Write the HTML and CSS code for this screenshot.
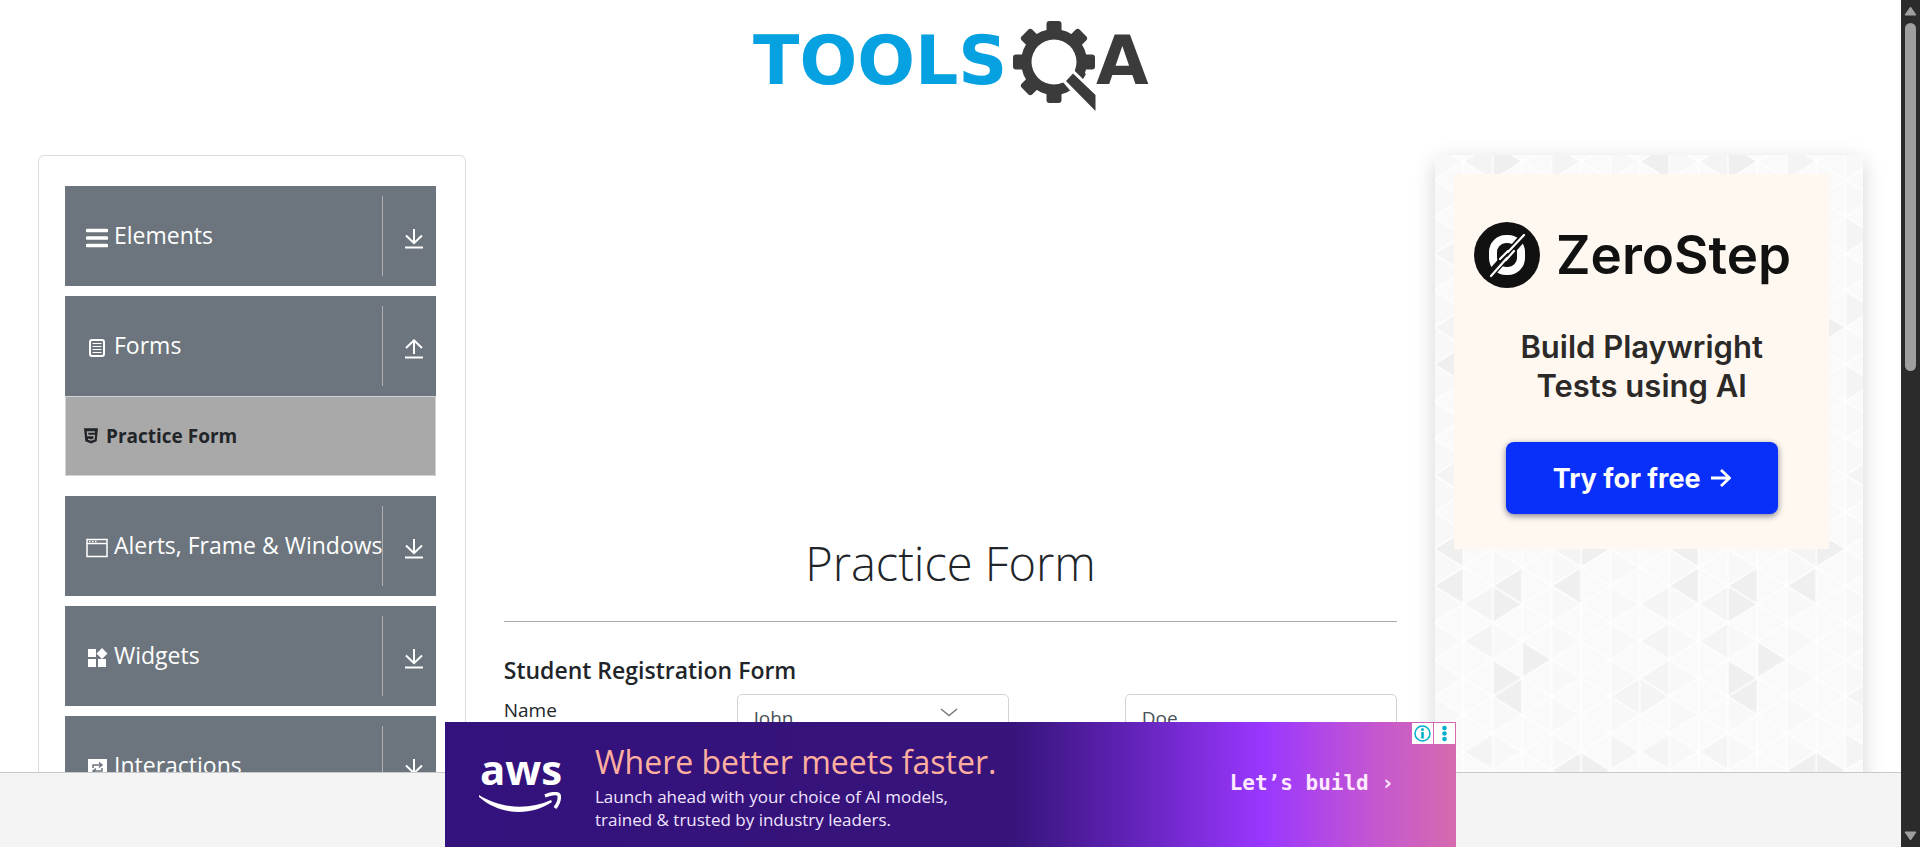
FILE: index.html
```html
<!DOCTYPE html>
<html lang="en">
<head>
<meta charset="utf-8">
<title>Practice Form</title>
<link rel="stylesheet" href="styles.css">
</head>
<body>
<svg class="sprite" aria-hidden="true">
  <symbol id="arrow-down" viewBox="0 0 20 20"><path d="M10 0V14M2 6.500L10 14.200L18 6.500M1 18.500H19" fill="none" stroke="currentColor" stroke-width="2"/></symbol>
  <symbol id="arrow-up" viewBox="0 0 20 20"><path d="M10 15V1M2 9L10 1.300L18 9M1 18.500H19" fill="none" stroke="currentColor" stroke-width="2"/></symbol>
</svg>
<div class="window">
  <div class="page">
    <header class="header">
      <a href="#" aria-label="ToolsQA home">
        <svg class="brand" viewBox="10 0 400 110">
          <text class="brand-text brand-blue" x="12" y="74">TOOLS</text>
          <g fill="#3b3b3b">
            <circle cx="313" cy="52" r="33"/>
            <g id="teeth">
              <rect x="305.500" y="11" width="15" height="82" rx="3"/>
              <rect x="305.500" y="11" width="15" height="82" rx="3" transform="rotate(45 313 52)"/>
              <rect x="305.500" y="11" width="15" height="82" rx="3" transform="rotate(90 313 52)"/>
              <rect x="305.500" y="11" width="15" height="82" rx="3" transform="rotate(135 313 52)"/>
            </g>
            <circle cx="313" cy="52" r="22.500" fill="#fff"/>
            <path d="M321 71L332 59L356 82V112Z" fill="#fff"/>
            <path d="M325 71L332 63.500L354.500 85V101Z"/>
            <path d="M334 61L336 58L345 64L342 69Z"/>
          </g>
          <text class="brand-text brand-dark" x="355" y="74">A</text>
        </svg>
      </a>
    </header>
    <div class="columns">
      <nav class="sidebar">
        <div class="group">
          <button class="group-head" type="button">
            <svg class="icon" viewBox="0 0 22 22"><path d="M1.500 4.500H20.500M1.500 12H20.500M1.500 19.500H20.500" stroke="currentColor" stroke-width="3.600" stroke-linecap="round"/></svg>
            <span class="group-name">Elements</span>
            <span class="toggle"><svg class="arrow"><use href="#arrow-down"/></svg></span>
          </button>
        </div>
        <div class="group group-open">
          <button class="group-head" type="button">
            <svg class="icon" viewBox="0 0 22 22"><rect x="4" y="4" width="14" height="16" rx="2" fill="none" stroke="currentColor" stroke-width="2"/><path d="M6.500 7.500H15.500M6.500 10.500H15.500M6.500 13.500H15.500M6.500 16.500H15.500" stroke="currentColor"/></svg>
            <span class="group-name">Forms</span>
            <span class="toggle"><svg class="arrow"><use href="#arrow-up"/></svg></span>
          </button>
          <a class="entry" href="#">
            <svg class="entry-icon" viewBox="0 0 16 18"><path d="M0 0H16L14.500 15L8 17.500L1.500 15Z" fill="currentColor"/><path d="M12.500 4.500H4L4.300 8.500H11.800L11.400 12.500L8 13.700L4.600 12.500" fill="none" stroke="#a9a9a9" stroke-width="1.600"/></svg>
            Practice Form
          </a>
        </div>
        <div class="group">
          <button class="group-head" type="button">
            <svg class="icon" viewBox="0 0 22 22"><path d="M1 3.500H21V20.500H1ZM1 7.500H21" fill="none" stroke="currentColor" stroke-width="1.500"/><path d="M3 5.500H11" stroke="currentColor" stroke-width="1.500" stroke-dasharray="1.500 1.500"/></svg>
            <span class="group-name">Alerts, Frame &amp; Windows</span>
            <span class="toggle"><svg class="arrow"><use href="#arrow-down"/></svg></span>
          </button>
        </div>
        <div class="group">
          <button class="group-head" type="button">
            <svg class="icon" viewBox="0 0 22 22" fill="currentColor"><path d="M2 3H10V11H2ZM2 13H10V21H2ZM12 13H20V21H12ZM16 2L21.500 7.500L16 13L10.500 7.500Z"/></svg>
            <span class="group-name">Widgets</span>
            <span class="toggle"><svg class="arrow"><use href="#arrow-down"/></svg></span>
          </button>
        </div>
        <div class="group">
          <button class="group-head" type="button">
            <svg class="icon" viewBox="0 0 22 22"><path d="M2 3H21V21H2Z" fill="currentColor"/><path d="M7 12V9H15M13 6.500L16 9L13 11.500M16 12V15H8M10 12.500L7 15L10 17.500" fill="none" stroke="#6c757d" stroke-width="1.500"/></svg>
            <span class="group-name">Interactions</span>
            <span class="toggle"><svg class="arrow"><use href="#arrow-down"/></svg></span>
          </button>
        </div>
      </nav>

      <main class="content">
        <h1 class="title">Practice Form</h1>
        <form class="form">
          <h2 class="form-title">Student Registration Form</h2>
          <div class="form-row">
            <label class="form-label" for="first">Name</label>
            <div class="field first">
              <input class="text-input" id="first" type="text" value="John">
              <svg class="field-icon" viewBox="0 0 18 9"><path d="M1 1L9 7.500L17 1" fill="none" stroke="#777" stroke-width="1.400"/></svg>
            </div>
            <div class="field last"><input class="text-input" type="text" value="Doe" aria-label="Last name"></div>
          </div>
        </form>
      </main>

      <aside class="promo">
        <svg class="promo-pattern" aria-hidden="true">
          <defs>
            <pattern id="mesh" width="2" height="2" patternUnits="userSpaceOnUse" patternTransform="translate(-1 -12) scale(29.4 18.45)">
              <path d="M0 0H2V2H0Z" fill="#fafafa"/>
              <path d="M0 0L1 1L0 2Z" fill="#f8f8f8"/>
            </pattern>
            <pattern id="shades" width="8" height="36" patternUnits="userSpaceOnUse" patternTransform="translate(-1 -12) scale(29.4 18.45)">
              <path fill="#efefef" d="M0 24L1 23V25ZM2 24L3 23V25ZM3 25L2 24V26ZM4 24L5 23V25ZM4 28L3 27V29ZM3 29L2 28V30ZM2 30L3 29V31ZM4 34L5 33V35ZM6 34L5 33V35ZM6 22L5 21V23ZM0 22L1 21V23ZM3 1L2 0V2ZM7 1L8 0V2ZM0 12L1 11V13ZM6 10L5 9V11Z"/>
              <path fill="#f4f4f4" d="M7 25L8 24V26ZM1 25L2 24V26ZM4 22L5 21V23ZM7 29L8 28V30ZM8 30L7 29V31ZM6 30L7 29V31ZM7 33L6 32V34ZM7 33L8 32V34ZM1 33L2 32V34ZM1 27L2 26V28ZM7 27L8 26V28ZM5 1L4 0V2ZM1 1L2 0V2ZM0 10L1 9V11ZM7 9L6 8V10ZM6 18L7 17V19ZM0 6L1 5V7ZM0 18L1 17V19ZM7 5L6 4V6ZM7 13L6 12V14Z"/>
            </pattern>
            <pattern id="lines" width="58.800" height="36.900" patternUnits="userSpaceOnUse" patternTransform="translate(-1 -12)">
              <path d="M0 0V36.900M58.800 0V36.900M29.400 0V36.900M0 0L58.800 36.900M58.800 0L0 36.900" fill="none" stroke="#fefefe" stroke-width="1.500"/>
            </pattern>
          </defs>
          <rect width="100%" height="100%" fill="url(#mesh)"/>
          <rect width="100%" height="100%" fill="url(#shades)"/>
          <rect width="100%" height="100%" fill="url(#lines)"/>
        </svg>
        <div class="zero">
          <div class="zero-brand">
            <svg class="zero-logo" viewBox="0 0 66 66"><circle cx="33" cy="33" r="33" fill="#111"/><rect x="19" y="17" width="28" height="32" rx="13" fill="none" stroke="#fff" stroke-width="8"/><path d="M14 55L52 12" stroke="#111" stroke-width="8"/><path d="M17 54L33 36M34 30L50 13M26 37L34 29M32 38L40 29" stroke="#fff" stroke-width="2.200" stroke-linecap="round"/></svg>
            ZeroStep
          </div>
          <p class="zero-text">Build Playwright<br>Tests using AI</p>
          <button class="zero-button" type="button">Try for free
            <svg class="zero-arrow" viewBox="0 0 20 18"><path d="M0 9H18M10 1L18.500 9L10 17" fill="none" stroke="#fff" stroke-width="2.800"/></svg>
          </button>
        </div>
      </aside>
    </div>

    <div class="dock">
      <div class="banner">
        <div class="aws">
          <span class="aws-name">aws</span>
          <svg class="aws-smile" viewBox="0 0 84 22"><path d="M0 3C22 17 50 18 72 8L73 10C52 24 22 24 0 5Z" fill="#fff"/><path d="M66 4C73 1 79 1 80 3C81 7 79 12 76 16" fill="none" stroke="#fff" stroke-width="3.500"/></svg>
        </div>
        <div class="banner-copy">
          <p class="banner-head">Where better meets faster.</p>
          <p class="banner-text">Launch ahead with your choice of AI models,<br>trained &amp; trusted by industry leaders.</p>
        </div>
        <a class="banner-link" href="#">Let’s build ›</a>
        <div class="ad-controls">
          <button class="ad-control" type="button" aria-label="Ad information"><svg viewBox="0 0 21 21"><circle cx="10.500" cy="10.500" r="7.500" fill="none" stroke="#00aecd" stroke-width="1.500"/><path d="M10.500 9V15.500" stroke="#00aecd" stroke-width="2.600"/><circle cx="10.500" cy="6.500" r="1.500" fill="#00aecd"/></svg></button>
          <button class="ad-control" type="button" aria-label="Ad options"><svg viewBox="0 0 21 21" fill="#00aecd"><circle cx="10.500" cy="5" r="2.300"/><circle cx="10.500" cy="10.500" r="2.300"/><circle cx="10.500" cy="16" r="2.300"/></svg></button>
        </div>
      </div>
    </div>
  </div>
  <div class="scrollbar" aria-hidden="true">
    <svg class="scroll-arrow" viewBox="0 0 13 10"><path d="M6.500 1L12 9H1Z" fill="#9f9f9f" stroke="#9f9f9f" stroke-linejoin="round"/></svg>
    <div class="scroll-track"><div class="scroll-thumb"></div></div>
    <svg class="scroll-arrow" viewBox="0 0 13 10"><path d="M6.500 9L12 1H1Z" fill="#9f9f9f" stroke="#9f9f9f" stroke-linejoin="round"/></svg>
  </div>
</div>
</body>
</html>
```

FILE: styles.css
```css
* { box-sizing: border-box; }

body {
  margin: 0;
  background: #fff;
  color: #212529;
  font-family: "Open Sans", "Noto Sans", sans-serif;
  font-size: 19px;
}

button, input { font: inherit; }
button { border: 0; cursor: pointer; }
p, h1, h2 { margin: 0; }

.sprite { position: absolute; width: 0; height: 0; }

.window { display: flex; height: 100vh; }

.page {
  position: relative;
  flex: 1;
  min-width: 0;
  overflow: hidden;
}

.header { padding: 10px 0 35px; text-align: center; }
.brand { display: block; width: 400px; height: 110px; margin: 0 auto; }
.brand-text { font: bold 68px "DejaVu Sans", sans-serif; }
.brand-blue { fill: #05a1e0; }
.brand-dark { fill: #3b3b3b; }

.columns {
  display: grid;
  grid-template-columns: repeat(4, minmax(0, 1fr));
  gap: 38px;
  padding: 0 38px;
}

.sidebar {
  padding: 30px 29px 30px 26px;
  border: 1px solid #dcdddf;
  border-radius: 6px;
}

.group { margin-bottom: 10px; }
.group-open { margin-bottom: 20px; }

.group-head {
  display: flex;
  align-items: center;
  width: 100%;
  height: 100px;
  padding: 10px 0 10px 21px;
  background: #6c757d;
  color: #fff;
  font-size: 23px;
  text-align: left;
  white-space: nowrap;
}

.icon { flex: none; width: 22px; height: 22px; margin-top: 2px; }
.group-name { flex: 1; min-width: 0; padding: 0 0 2px 6px; }

.toggle {
  display: flex;
  flex: none;
  align-items: center;
  justify-content: center;
  width: 54px;
  height: 80px;
  padding: 6px 0 0 10px;
  border-left: 1px solid #b0b0b0;
}

.arrow { width: 20px; height: 20px; }

.entry {
  display: flex;
  align-items: center;
  gap: 8px;
  height: 80px;
  padding-left: 18px;
  border: 1px solid #d0d3da;
  background: #a9a9a9;
  color: #212529;
  font-weight: 700;
  text-decoration: none;
}

.entry-icon { width: 14px; height: 16px; }

.content { grid-column: span 2; padding-top: 372px; }

.title {
  padding-bottom: 22px;
  border-bottom: 1px solid #a7a8aa;
  font-size: 47px;
  font-weight: 300;
  line-height: 72px;
  text-align: center;
}

.form-title {
  padding: 31px 0 7px;
  font-size: 23px;
  font-weight: 600;
  line-height: 34px;
}

.form-row {
  display: grid;
  grid-template-columns: repeat(12, minmax(0, 1fr));
  column-gap: 38px;
}

.form-label { grid-column: span 3; line-height: 32px; }
.field { position: relative; grid-column: span 4; }
.last { grid-column: 9 / span 4; }

.text-input {
  display: block;
  width: 100%;
  height: 48px;
  padding: 0 16px;
  border: 1px solid #ced4da;
  border-radius: 5px;
  background: #fff;
  color: #495057;
}

.field-icon { position: absolute; top: 14px; right: 51px; width: 18px; height: 9px; }

.promo {
  position: relative;
  min-height: 900px;
  padding: 19px 34px 19px 19px;
  box-shadow: 0 6px 20px rgba(0, 0, 0, 0.17);
}

.promo-pattern { position: absolute; inset: 0; width: 100%; height: 100%; }

.zero {
  position: relative;
  display: flex;
  flex-direction: column;
  align-items: center;
  height: 375px;
  padding-top: 48px;
  background: #fef8f1;
  color: #111;
  font-family: Inter, sans-serif;
}

.zero-brand {
  display: flex;
  align-items: center;
  gap: 16px;
  padding-right: 18px;
  font-size: 53px;
  font-weight: 600;
  line-height: 66px;
}

.zero-logo { width: 66px; height: 66px; }

.zero-text {
  padding: 39px 0 37px;
  color: #2c2a28;
  font-size: 31px;
  font-weight: 600;
  line-height: 39px;
  text-align: center;
}

.zero-button {
  display: flex;
  align-items: center;
  justify-content: center;
  gap: 10px;
  width: 272px;
  height: 72px;
  border-radius: 8px;
  background: #0930fb;
  box-shadow: 0 2px 6px rgba(0, 0, 40, 0.5);
  color: #fff;
  font-size: 27px;
  font-weight: 700;
}

.zero-arrow { width: 20px; height: 18px; }

.dock {
  position: absolute;
  right: 0;
  bottom: 0;
  left: 0;
  display: flex;
  justify-content: center;
  height: 75px;
  align-items: flex-end;
  border-top: 1px solid #c8c8c8;
  background: #f4f4f4;
}

.banner {
  position: relative;
  display: flex;
  flex: none;
  width: 1011px;
  height: 125px;
  padding: 17px 62px 0 34px;
  background: linear-gradient(90deg, #34127d 0%, #36147a 56%, #5a20ae 66%, #9a37ff 81%, #c557d0 92%, #d56aae 100%);
  color: #fff;
}

.aws { display: flex; flex-direction: column; align-items: center; width: 84px; }
.aws-name { height: 50px; font-size: 42px; font-weight: 700; line-height: 60px; }
.aws-smile { width: 84px; height: 22px; margin-top: 3px; }

.banner-copy { flex: 1; padding-left: 32px; }
.banner-head { color: #ffaf9f; font-size: 32px; line-height: 46px; }
.banner-text { color: #f0e4ff; font-size: 17px; font-weight: 500; line-height: 23px; }

.banner-link {
  padding-top: 31px;
  color: #ffeaff;
  font: bold 21px/26px "DejaVu Sans Mono", monospace;
  text-decoration: none;
}

.ad-controls { position: absolute; top: 1px; right: 1px; display: flex; gap: 1px; }
.ad-control { width: 21px; height: 21px; padding: 0; background: #fff; }
.ad-control svg { display: block; }

.scrollbar {
  display: flex;
  flex: none;
  flex-direction: column;
  align-items: center;
  gap: 7px;
  width: 19px;
  padding: 6px 0;
  background: #2b2b2b;
}

.scroll-arrow { width: 13px; height: 10px; }
.scroll-track { flex: 1; }
.scroll-thumb { width: 11px; height: 348px; border-radius: 6px; background: #9f9f9f; }
```
